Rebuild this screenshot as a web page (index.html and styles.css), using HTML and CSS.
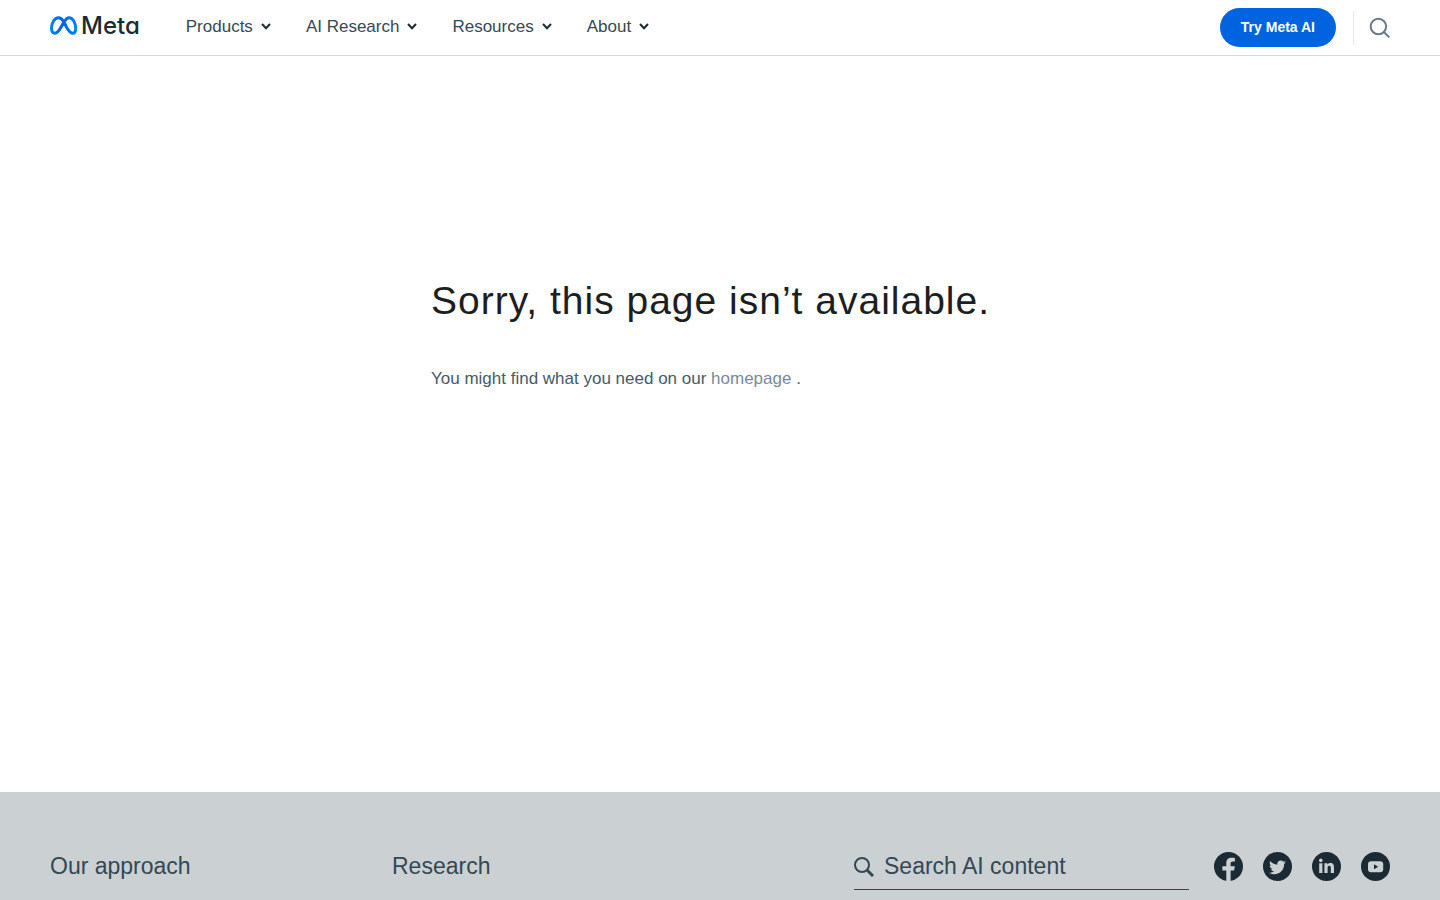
FILE: index.html
```
<!DOCTYPE html>
<html lang="en">
  <head>
    <meta charset="UTF-8" />
    <meta name="viewport" content="width=device-width, initial-scale=1.0" />
    <title>Meta AI</title>
    <link rel="stylesheet" href="styles.css">
  </head>
  <body>
    <header class="header">
      <a class="logo" href="#">
        <svg class="logo-mark" viewBox="0 0 28 20" width="28" height="20" fill="none" aria-hidden="true">
          <defs>
            <linearGradient id="loop" x1="0" y1="0" x2="1" y2="0">
              <stop offset="0" stop-color="#0082fb" />
              <stop offset="0.4" stop-color="#0064e0" />
              <stop offset="1" stop-color="#0082fb" />
            </linearGradient>
          </defs>
          <path d="M13.6 5.3C11.9 2.8 10.2 1.7 8.4 1.7C4.5 1.7 1.5 6.9 1.5 12.3C1.5 15.5 2.8 17.2 5 17.2C7.4 17.2 8.9 15 11.1 11.1L13.9 6.1C15.6 3.1 17.2 1.7 19.2 1.7C22.8 1.7 25.7 6.8 25.7 12.4C25.7 15.6 24.5 17.2 22.5 17.2C20.1 17.2 18.7 15 16.4 11L14.4 6.7Z" stroke="url(#loop)" stroke-width="3" />
        </svg>
        <span class="logo-text">Meta</span>
      </a>
      <nav class="nav">
        <button class="nav-item">Products
          <svg class="chevron" viewBox="0 0 10 8" width="10" height="8" aria-hidden="true"><path d="M1 1L5 5.3L9 1" /></svg>
        </button>
        <button class="nav-item">AI Research
          <svg class="chevron" viewBox="0 0 10 8" width="10" height="8" aria-hidden="true"><path d="M1 1L5 5.3L9 1" /></svg>
        </button>
        <button class="nav-item">Resources
          <svg class="chevron" viewBox="0 0 10 8" width="10" height="8" aria-hidden="true"><path d="M1 1L5 5.3L9 1" /></svg>
        </button>
        <button class="nav-item">About
          <svg class="chevron" viewBox="0 0 10 8" width="10" height="8" aria-hidden="true"><path d="M1 1L5 5.3L9 1" /></svg>
        </button>
      </nav>
      <div class="actions">
        <a class="try-button" href="#">Try Meta AI</a>
        <button class="search-button" aria-label="Search">
          <svg viewBox="0 0 22 22" width="22" height="22" aria-hidden="true">
            <circle cx="10.4" cy="9.5" r="7.7" />
            <path d="M15.9 15L21.3 20.4" />
          </svg>
        </button>
      </div>
    </header>

    <main class="main">
      <div class="message">
        <h1>Sorry, this page isn’t available.</h1>
        <p>You might find what you need on our <a href="#">homepage</a> .</p>
      </div>
    </main>

    <footer class="footer">
      <a class="footer-link" href="#">Our approach</a>
      <a class="footer-link" href="#">Research</a>
      <div class="footer-side">
        <form class="footer-search">
          <svg viewBox="0 0 20 20" width="20" height="20" aria-hidden="true">
            <circle cx="8" cy="8" r="7" stroke-width="2" />
            <path d="M13 13L19 19" stroke-width="3" />
          </svg>
          <input type="search" placeholder="Search AI content" aria-label="Search AI content" />
        </form>
        <div class="social">
          <a href="#" aria-label="Facebook">
            <svg viewBox="0 0 29 29" width="29" height="29">
              <circle class="disc" cx="14.5" cy="14.5" r="14.5" />
              <path class="glyph" d="M12.3 29V18.4H8.4V14.3H12.3V11C12.3 7.5 14.4 5.7 17.7 5.7C18.9 5.7 20 5.8 20.9 6V9.6H19C17.2 9.6 16.6 10.5 16.6 11.8V14.3H20.8L20.1 18.4H16.6V29Z" />
            </svg>
          </a>
          <a href="#" aria-label="Twitter">
            <svg viewBox="0 0 29 29" width="29" height="29">
              <circle class="disc" cx="14.5" cy="14.5" r="14.5" />
              <path class="glyph" d="M23 10.2C22.4 10.5 21.7 10.7 21 10.8C21.7 10.3 22.3 9.6 22.6 8.8C21.9 9.2 21.1 9.5 20.3 9.7C19.6 9 18.7 8.5 17.7 8.5C15.4 8.5 13.8 10.6 14.3 12.8C11.4 12.6 8.9 11.3 7.2 9.1C6.3 10.7 6.8 12.8 8.3 13.8C7.7 13.8 7.2 13.6 6.7 13.4C6.7 15 7.9 16.5 9.5 16.9C9 17 8.5 17 8 16.9C8.4 18.2 9.7 19.3 11.2 19.3C9.8 20.4 8 20.9 6.1 20.7C7.7 21.7 9.5 22.2 11.4 22.2C17.7 22.2 21.3 16.9 21.1 12.1C21.8 11.6 22.5 10.9 23 10.2Z" />
            </svg>
          </a>
          <a href="#" aria-label="LinkedIn">
            <svg viewBox="0 0 29 29" width="29" height="29">
              <circle class="disc" cx="14.5" cy="14.5" r="14.5" />
              <circle class="glyph" cx="8.8" cy="8.4" r="1.8" />
              <rect class="glyph" x="7.2" y="11.3" width="3.2" height="9.7" />
              <path class="glyph" d="M12.4 11.3H15.4V12.6C16 11.6 17 11 18.3 11C21.3 11 22 13 22 15.6V21H18.8V16.2C18.8 14.9 18.7 13.7 17.3 13.7C15.8 13.7 15.6 14.9 15.6 16.2V21H12.4Z" />
            </svg>
          </a>
          <a href="#" aria-label="YouTube">
            <svg viewBox="0 0 29 29" width="29" height="29">
              <circle class="disc" cx="14.5" cy="14.5" r="14.5" />
              <rect class="glyph" x="7" y="9.3" width="15.2" height="11" rx="3" />
              <path class="disc" d="M13 12.3L17.2 14.8L13 17.3Z" />
            </svg>
          </a>
        </div>
      </div>
    </footer>
  </body>
</html>
```
FILE: styles.css
```
* {
  margin: 0;
  padding: 0;
  box-sizing: border-box;
}

body {
  display: flex;
  flex-direction: column;
  min-height: 100vh;
  font-family: "Liberation Sans", Arial, sans-serif;
  font-size: 17px;
  color: #344854;
  background: #fff;
}

a {
  color: inherit;
  text-decoration: none;
}

button {
  border: none;
  background: none;
  font: inherit;
  color: inherit;
  cursor: pointer;
}

/* header */
.header {
  display: flex;
  align-items: center;
  height: 56px;
  padding: 0 50px;
  border-bottom: 1px solid #d6d9db;
}

.logo {
  display: flex;
  align-items: center;
  gap: 3px;
  padding-bottom: 4px;
  color: #1c2b33;
}

.logo-text {
  font-family: Inter, sans-serif;
  font-size: 24px;
  font-weight: 500;
  line-height: 24px;
  font-feature-settings: "cv11";
}

.nav {
  display: flex;
  gap: 35px;
  margin-left: 46px;
  padding-bottom: 2px;
}

.nav-item {
  display: flex;
  align-items: center;
  gap: 8px;
  line-height: 24px;
}

.chevron {
  fill: none;
  stroke: #1c2b33;
  stroke-width: 2;
}

.actions {
  display: flex;
  align-items: center;
  margin-left: auto;
}

.try-button {
  padding: 0 21px;
  border-radius: 20px;
  background: #0064e0;
  color: #fff;
  font-size: 14px;
  font-weight: bold;
  line-height: 39px;
}

.search-button {
  display: flex;
  align-items: center;
  height: 34px;
  margin-left: 17px;
  padding-left: 14px;
  border-left: 1px solid #e4e7e9;
}

.search-button svg {
  fill: none;
  stroke: #67788a;
  stroke-width: 2;
}

/* message */
.main {
  flex: 1;
  padding: 220px 50px 400px;
}

.message {
  max-width: 578px;
  margin: 0 auto;
}

.message h1 {
  margin-bottom: 41px;
  color: #1c1e21;
  font-size: 39px;
  font-weight: normal;
  letter-spacing: 1px;
  line-height: 50px;
}

.message p {
  line-height: 24px;
  color: #465a69;
}

.message a {
  color: #7b8a96;
}

/* footer */
.footer {
  display: grid;
  grid-template-columns: 342fr 462fr 536fr;
  align-items: start;
  padding: 57px 50px 10px;
  background: #cbd0d3;
  font-size: 23px;
}

.footer-link {
  line-height: 34px;
}

.footer-side {
  display: flex;
  gap: 25px;
}

.footer-search {
  display: flex;
  flex: 1;
  align-items: center;
  gap: 10px;
  height: 41px;
  padding-bottom: 5px;
  border-bottom: 1px solid #344854;
}

.footer-search svg {
  flex: none;
  fill: none;
  stroke: #344854;
}

.footer-search input {
  flex: 1;
  min-width: 0;
  border: none;
  outline: none;
  background: none;
  font: inherit;
  color: inherit;
}

.footer-search input::placeholder {
  color: #344854;
  opacity: 1;
}

.social {
  display: flex;
  gap: 20px;
  padding-top: 3px;
}

.social svg {
  display: block;
}

.disc {
  fill: #1c2b33;
}

.glyph {
  fill: #cbd0d3;
}
```
